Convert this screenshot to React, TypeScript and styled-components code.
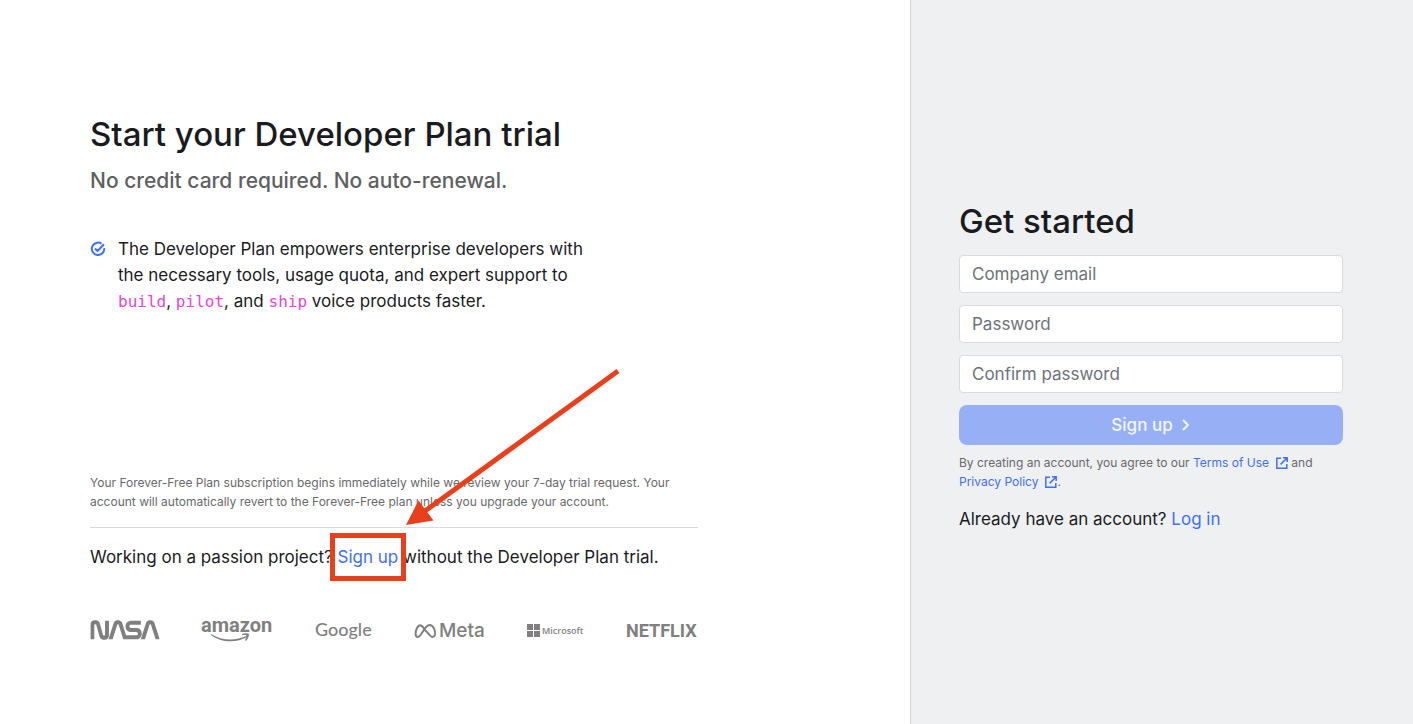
import React from "react";
import styled, { createGlobalStyle } from "styled-components";
import { SiNasa } from "react-icons/si";

const GlobalStyle = createGlobalStyle`
  *, *::before, *::after { box-sizing: border-box; }
  body {
    margin: 0;
    background: #ffffff;
    color: #1a1b1e;
    font-family: Inter, "Open Sans", sans-serif;
    font-size: 17px;
    line-height: 26px;
  }
  h1, h2, p { margin: 0; font-weight: 400; }
`;

const Page = styled.div`
  display: flex;
  min-height: 100vh;
`;

const Promo = styled.main`
  flex: 1;
  min-width: 0;
  padding: 112px 90px 72px;
`;

const PromoContent = styled.div`
  max-width: 608px;
`;

const Title = styled.h1`
  font-size: 33px;
  line-height: 44px;
  font-weight: 500;
`;

const Subtitle = styled.p`
  margin-top: 12px;
  font-size: 21px;
  font-weight: 500;
  color: #5f6062;
`;

const Feature = styled.div`
  display: flex;
  gap: 12px;
  margin-top: 42px;
`;

const CheckIcon = styled.svg`
  flex: none;
  width: 16px;
  height: 16px;
  margin-top: 5px;
`;

const Code = styled.code`
  font-family: "DejaVu Sans Mono", monospace;
  font-size: 16px;
  color: #e645dc;
`;

const FinePrint = styled.p`
  font-size: 12px;
  line-height: 19px;
  color: #68696b;
`;

const TrialNote = styled(FinePrint)`
  margin-top: 158px;
  padding-bottom: 16px;
  border-bottom: 1px solid #d9dbe0;
`;

const PassionLine = styled.p`
  margin-top: 16px;
`;

const TextLink = styled.a`
  color: #3f6ffb;
  text-decoration: none;
`;

const Callout = styled.span`
  position: relative;
`;

const CalloutBox = styled.span`
  position: absolute;
  inset: -14px -8px;
  border: 5px solid #e8401c;
  pointer-events: none;
`;

const CalloutArrow = styled.svg`
  position: absolute;
  left: 67px;
  bottom: 39px;
  width: 220px;
  height: 162px;
  pointer-events: none;
`;

const Logos = styled.div`
  display: flex;
  align-items: center;
  justify-content: space-between;
  height: 28px;
  margin-top: 46px;
  color: #808080;
`;

const Aside = styled.aside`
  display: flex;
  flex-direction: column;
  justify-content: center;
  width: 503px;
  padding: 48px 70px 42px 48px;
  background: #eff0f2;
  border-left: 1px solid #d3d5da;
`;

const Form = styled.form`
  display: flex;
  flex-direction: column;
  gap: 12px;
`;

const FormTitle = styled.h2`
  font-size: 33px;
  line-height: 44px;
  font-weight: 500;
`;

const Field = styled.input`
  width: 100%;
  height: 38px;
  padding: 0 12px;
  border: 1px solid #d9dbe1;
  border-radius: 4px;
  background: #ffffff;
  font: inherit;
  color: inherit;
  &::placeholder { color: #6c727b; opacity: 1; }
`;

const SubmitButton = styled.button`
  display: flex;
  align-items: center;
  justify-content: center;
  gap: 8px;
  height: 40px;
  border: 0;
  border-radius: 8px;
  background: #97b0f5;
  color: #f3f5fb;
  font: inherit;
  font-weight: 500;
`;

const Terms = styled(FinePrint)`
  margin-top: 8px;
`;

const LinkIcon = styled.svg`
  width: 12px;
  height: 12px;
  margin-left: 7px;
  vertical-align: -2px;
`;

const LoginLine = styled.p`
  margin-top: 15px;
`;

const External = () => (
  <LinkIcon viewBox="0 0 12 12" fill="none" stroke="currentColor" strokeWidth="1.5" aria-hidden="true">
    <path d="M5 1.2H.8v10h10V7M7 .8h4.2V5M11 1 4.6 7.4" />
  </LinkIcon>
);

const MicrosoftLogo = () => (
  <svg width="58" height="14" viewBox="0 0 58 14" fill="currentColor" role="img" aria-label="Microsoft">
    <path d="M0 1h6v6H0zM7 1h6v6H7zM0 8h6v6H0zM7 8h6v6H7z" />
    <text x="15" y="11" fontSize="9" fontWeight="600" fontFamily="'Open Sans', sans-serif">Microsoft</text>
  </svg>
);

const AmazonLogo = () => (
  <svg width="74" height="28" viewBox="0 0 74 28" fill="currentColor" role="img" aria-label="Amazon">
    <text x="0" y="16" fontSize="20" fontWeight="700" fontFamily="Roboto, sans-serif">amazon</text>
    <path d="M10 18c11 7 25 7 35 2l1 1c-10 6-26 6-36-2z" />
    <path d="M41 18c3-1 6-1 7 0 0 2-1 5-3 7l-1-1c1-2 2-4 1-5-1 0-3 0-4 0z" />
  </svg>
);

const GoogleLogo = () => (
  <svg width="58" height="26" viewBox="0 0 58 26" fill="currentColor" role="img" aria-label="Google">
    <text x="0" y="19" fontSize="18" fontWeight="500" fontFamily="Lato, sans-serif">Google</text>
  </svg>
);

const MetaLogo = () => (
  <svg width="73" height="26" viewBox="0 0 73 26" fill="none" role="img" aria-label="Meta">
    <path d="M11 13C8 7.500 5 7 3 11C1 15 .8 20 4 20C7.500 20 10.500 8 15.500 8C19.500 8 21.500 14 21 17.500C20.500 20.500 17.500 20.500 16 18.500C14 16 13 15 11 13" stroke="currentColor" strokeWidth="2" />
    <text x="25" y="20" fontSize="19" fontWeight="500" fontFamily="Inter, sans-serif" fill="currentColor">Meta</text>
  </svg>
);

const NetflixLogo = () => (
  <svg width="72" height="26" viewBox="0 0 72 26" fill="currentColor" role="img" aria-label="Netflix">
    <text x="0" y="20" fontSize="18" fontWeight="700" fontFamily="Roboto, sans-serif">NETFLIX</text>
  </svg>
);

const NasaLogo = () => (
  <svg width="70" height="26" viewBox="0 7.500 24 9" role="img" aria-label="NASA">
    <SiNasa width="24" height="24" size="24" />
  </svg>
);

export default function App() {
  return (
    <Page>
      <GlobalStyle />
      <Promo>
        <PromoContent>
          <Title>Start your Developer Plan trial</Title>
          <Subtitle>No credit card required. No auto-renewal.</Subtitle>
          <Feature>
            <CheckIcon viewBox="0 0 16 16" fill="none" stroke="#3f6ffb" strokeWidth="2" aria-hidden="true">
              <path d="M11.500 2.700A6.200 6.200 0 1 0 14.200 7.200M5 7.500l2.500 2.500L14 3.300" />
            </CheckIcon>
            <p>
              The Developer Plan empowers enterprise developers with
              <br />
              the necessary tools, usage quota, and expert support to
              <br />
              <Code>build</Code>, <Code>pilot</Code>, and <Code>ship</Code> voice products faster.
            </p>
          </Feature>
          <TrialNote>
            Your Forever-Free Plan subscription begins immediately while we review your 7-day trial request. Your
            <br />
            account will automatically revert to the Forever-Free plan unless you upgrade your account.
          </TrialNote>
          <PassionLine>
            Working on a passion project?{" "}
            <Callout>
              <TextLink href="#signup">Sign up</TextLink>
              <CalloutBox />
              <CalloutArrow viewBox="0 0 220 162" aria-hidden="true">
                <path d="M213 5 20 145" stroke="#e8401c" strokeWidth="5" />
                <path d="M1 159 13.500 134.500 28.500 154.500z" fill="#e8401c" />
              </CalloutArrow>
            </Callout>{" "}
            without the Developer Plan trial.
          </PassionLine>
          <Logos>
            <NasaLogo />
            <AmazonLogo />
            <GoogleLogo />
            <MetaLogo />
            <MicrosoftLogo />
            <NetflixLogo />
          </Logos>
        </PromoContent>
      </Promo>
      <Aside>
        <Form onSubmit={(event) => event.preventDefault()}>
          <FormTitle>Get started</FormTitle>
          <Field type="email" placeholder="Company email" aria-label="Company email" />
          <Field type="password" placeholder="Password" aria-label="Password" />
          <Field type="password" placeholder="Confirm password" aria-label="Confirm password" />
          <SubmitButton type="submit">
            Sign up
            <svg width="10" height="12" viewBox="0 0 10 12" fill="none" stroke="currentColor" strokeWidth="2" aria-hidden="true">
              <path d="M2 1l5 5-5 5" />
            </svg>
          </SubmitButton>
        </Form>
        <Terms>
          By creating an account, you agree to our{" "}
          <TextLink href="#terms">
            Terms of Use
            <External />
          </TextLink>{" "}
          and
          <br />
          <TextLink href="#privacy">
            Privacy Policy
            <External />
          </TextLink>
          .
        </Terms>
        <LoginLine>
          Already have an account? <TextLink href="#login">Log in</TextLink>
        </LoginLine>
      </Aside>
    </Page>
  );
}
